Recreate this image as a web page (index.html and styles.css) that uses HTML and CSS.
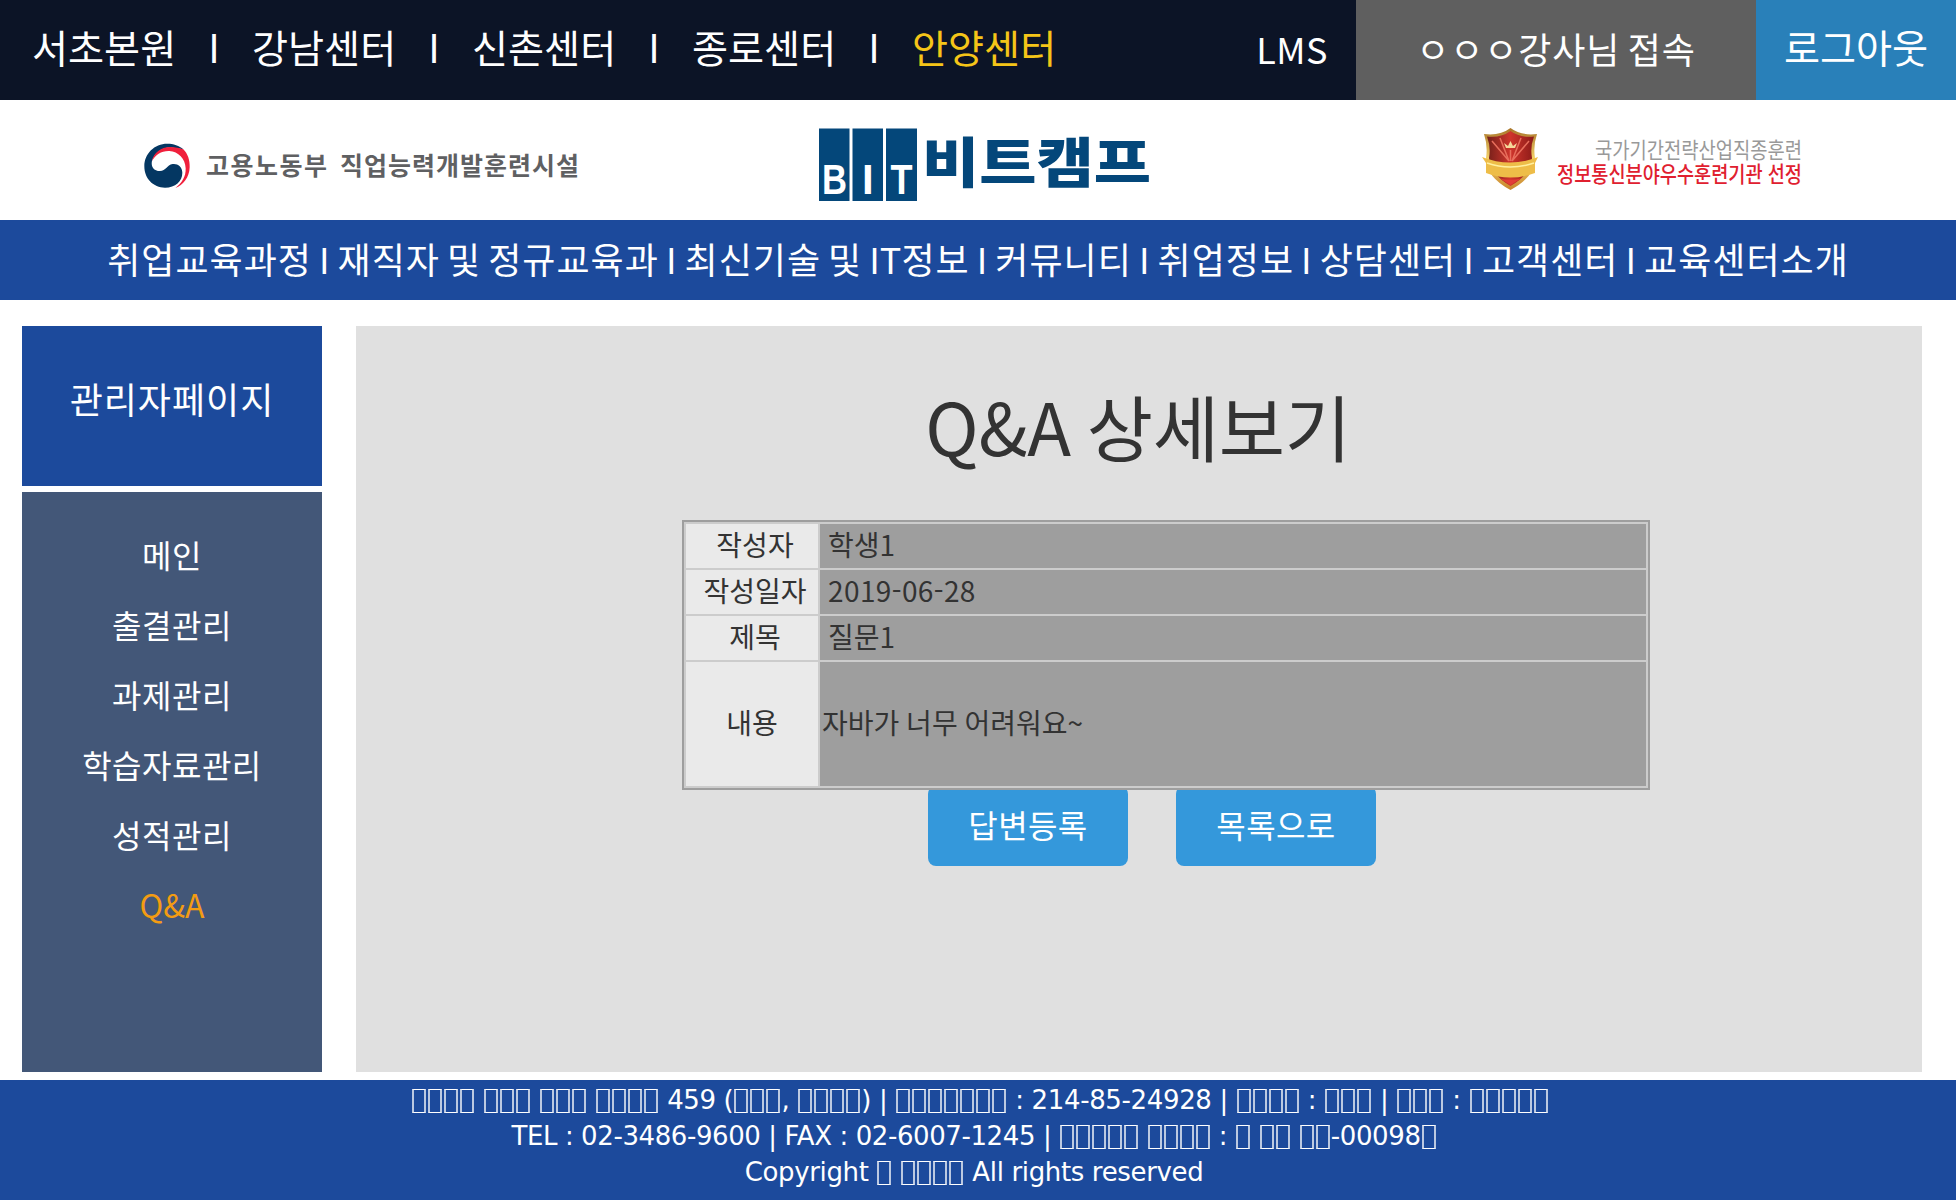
FILE: index.html
```html
<!DOCTYPE html>
<html lang="ko">
<head>
<meta charset="utf-8">
<title>Q&amp;A 상세보기</title>
<link rel="stylesheet" href="styles.css">
</head>
<body>
<header class="topbar">
  <nav class="centers"><a>서초본원</a><i>I</i><a>강남센터</a><i>I</i><a>신촌센터</a><i>I</i><a>종로센터</a><i>I</i><a class="current">안양센터</a></nav>
  <div class="lms">LMS</div>
  <div class="user">ㅇㅇㅇ강사님 접속</div>
  <div class="logout">로그아웃</div>
</header>
<div class="brand">
  <svg class="brand-svg" width="1956" height="120" viewBox="0 100 1956 120">
    <g transform="translate(130 120) scale(.3333)">
      <path d="M160 88C148 77 130 71 112 71C73 71 43 101 43 139C43 176 70 203 105 203C136 203 157 184 157 158C157 139 142 130 128 132C110 135 108 153 90 153C72 153 62 140 66 122C74 100 95 84 120 82Z" fill="#043762"/>
      <path d="M66 124C70 98 94 81 120 81C136 81 150 84 160 88C173 101 180 120 179 142C178 172 160 196 136 204C156 189 168 170 167 145C166 115 145 95 118 93C95 92 76 104 66 124Z" fill="#f0203c"/>
    </g>
    <g class="gov">
      <text x="206" y="174.500" textLength="121">고용노동부</text>
      <text x="340" y="174.500" textLength="239">직업능력개발훈련시설</text>
    </g>
    <path d="M819 128.500h30.500V201H819zM852.500 128.500H883V201h-30.500zM886 128.500h31V201h-31z" fill="#04477a"/>
    <g class="bit">
      <text x="822" y="193.500" textLength="25" lengthAdjust="spacingAndGlyphs">B</text>
      <text x="862" y="193.500">I</text>
      <text x="890.500" y="193.500" textLength="22" lengthAdjust="spacingAndGlyphs">T</text>
    </g>
    <text class="camp" x="922" y="182.500" textLength="229" lengthAdjust="spacingAndGlyphs">비트캠프</text>
    <defs>
      <linearGradient id="gold" x1="0" y1="0" x2="0" y2="1"><stop offset="0" stop-color="#a87428"/><stop offset=".5" stop-color="#f5d36a"/><stop offset="1" stop-color="#c8842c"/></linearGradient>
      <linearGradient id="red" x1="0" y1="0" x2="1" y2="0"><stop offset="0" stop-color="#74201a"/><stop offset=".5" stop-color="#cf352c"/><stop offset="1" stop-color="#8c1b18"/></linearGradient>
    </defs>
    <path d="M1484 134Q1500 136 1510.500 128Q1521 136 1537 134Q1533 146 1535 158Q1535 177 1510.500 190Q1486 177 1486 158Q1488 146 1484 134Z" fill="url(#gold)"/>
    <path d="M1487 136.500Q1501 138 1510.500 131Q1520 138 1534 136.500Q1530 147 1532 158Q1531 174 1510.500 186Q1490 174 1489 158Q1491 147 1487 136.500Z" fill="url(#red)"/>
    <path d="M1509 161L1492 141M1509 161L1500 138M1510.500 161V150M1512 161L1521 138M1512 161L1529 141" stroke="#e86e5c" stroke-width="1.500" fill="none"/>
    <path d="M1504 143l4 3 2.500-5 2.500 5 4-3-2 5h-9z" fill="#f6d79a"/>
    <path d="M1482 157Q1510 168 1538 157L1535 163V173Q1510 182 1486 173V163Z" fill="#eebd48"/>
    <path d="M1487 163Q1510 171 1534 163" stroke="#fff0a0" stroke-width="1.500" fill="none"/>
    <path d="M1500 178.500Q1510 181 1521 178.500L1510.500 185Z" fill="#e23c38"/>
    <text class="award grey" x="1595" y="157.500" textLength="207" lengthAdjust="spacingAndGlyphs">국가기간전략산업직종훈련</text>
    <text class="award red" x="1557" y="182" textLength="245" lengthAdjust="spacingAndGlyphs">정보통신분야우수훈련기관 선정</text>
  </svg>
</div>
<nav class="mainnav">취업교육과정 I 재직자 및 정규교육과 I 최신기술 및 <span class="latin">IT</span>정보 I 커뮤니티 I 취업정보 I 상담센터 I 고객센터 I 교육센터소개</nav>
<div class="content">
  <aside class="side">
    <div class="side-title">관리자페이지</div>
    <ul class="menu">
      <li>메인</li><li>출결관리</li><li>과제관리</li><li>학습자료관리</li><li>성적관리</li><li class="active">Q&amp;A</li>
    </ul>
  </aside>
  <main class="panel">
    <h1>Q&amp;A 상세보기</h1>
    <div class="detail">
      <div class="label">작성자</div><div class="value">학생1</div>
      <div class="label">작성일자</div><div class="value date">2019-06-28</div>
      <div class="label">제목</div><div class="value">질문1</div>
      <div class="label body-label">내용</div><div class="value body-value">자바가 너무 어려워요~</div>
    </div>
    <div class="actions"><button>답변등록</button><button>목록으로</button></div>
  </main>
</div>
<footer class="footer">
  <p><b></b><b></b><b></b><b></b> <b></b><b></b><b></b> <b></b><b></b><b></b> <b></b><b></b><b></b><b></b> 459 (<b></b><b></b><b></b>, <b></b><b></b><b></b><b></b>) | <b></b><b></b><b></b><b></b><b></b><b></b><b></b> : 214-85-24928 | <b></b><b></b><b></b><b></b> : <b></b><b></b><b></b> | <b></b><b></b><b></b> : <b></b><b></b><b></b><b></b><b></b></p>
  <p class="contact">TEL : 02-3486-9600 | FAX : 02-6007-1245 | <b></b><b></b><b></b><b></b><b></b> <b></b><b></b><b></b><b></b> : <b></b> <b></b><b></b> <b></b><b></b>-00098<b></b></p>
  <p class="copy">Copyright <b></b> <b></b><b></b><b></b><b></b> All rights reserved</p>
</footer>
</body>
</html>
```
FILE: styles.css
```css
* { box-sizing: border-box; margin: 0; padding: 0; }
body { width: 1956px; height: 1200px; background: #fff; color: #fff; font-family: "Noto Sans CJK KR", sans-serif; overflow: hidden; display: flex; flex-direction: column; white-space: nowrap; }
.topbar { height: 100px; background: #0c1426; display: flex; line-height: 95px; font-size: 36px; }
.centers { flex: 1; display: flex; padding-left: 32px; font-size: 39.200px; line-height: 92px; }
.centers a { width: 144px; }
.centers i { width: 76px; font-style: normal; text-align: center; }
.centers .current { color: #f5c518; }
.lms { width: 128px; text-align: center; letter-spacing: .5px; line-height: 96px; }
.user { width: 400px; background: #5f5f5f; text-align: center; letter-spacing: .9px; word-spacing: -3.500px; line-height: 96px; }
.logout { width: 200px; background: #2980b9; text-align: center; font-size: 39.200px; line-height: 92px; }
.brand { height: 120px; }
.brand-svg { display: block; }
.gov { font-size: 25px; font-weight: 700; fill: #5f6062; }
.bit { font-family: "Liberation Sans", sans-serif; font-weight: 700; font-size: 42px; fill: #fff; }
.camp { font-weight: 900; font-size: 54px; fill: #04477a; }
.award { font-size: 22px; }
.grey { fill: #999; }
.red { fill: #e0202f; font-weight: 500; }
.mainnav { height: 80px; background: #1c4a9c; text-align: center; font-size: 36px; letter-spacing: 1px; word-spacing: -4px; line-height: 76px; }
.latin { letter-spacing: 0; }
.content { height: 780px; padding: 26px 34px 8px 22px; display: flex; gap: 34px; }
.side { width: 300px; display: flex; flex-direction: column; gap: 6px; text-align: center; }
.side-title { height: 160px; background: #1c4a9c; font-size: 36px; letter-spacing: 1px; line-height: 144px; }
.menu { flex: 1; background: #435778; list-style: none; font-size: 32px; letter-spacing: .5px; line-height: 70px; padding-top: 27px; }
.menu .active { color: #f39c12; letter-spacing: 0; }
.panel { flex: 1; background: #e0e0e0; color: #333; display: flex; flex-direction: column; align-items: center; }
h1 { height: 194px; line-height: 197px; font-size: 72px; font-weight: 400; letter-spacing: -.2px; word-spacing: -4px; padding-right: 2px; }
.detail { position: relative; z-index: 1; margin-left: 54px; width: 968px; height: 270px; border: 2px solid #9e9e9e; padding: 2px; background: #ccc; display: grid; grid-template-columns: 132px 1fr; grid-template-rows: 44px 44px 44px 124px; gap: 2px; font-size: 28px; line-height: 41px; }
.label { background: #eaeaea; text-align: center; padding-left: 6px; }
.value { background: #9e9e9e; padding-left: 8px; }
.date { letter-spacing: .4px; }
.body-label { padding-left: 0; line-height: 121px; }
.body-value { padding-left: 2px; line-height: 121px; word-spacing: -1px; }
.actions { display: flex; gap: 48px; margin: -4px 0 0 26px; }
button { width: 200px; height: 80px; padding-bottom: 4px; border: 0; border-radius: 8px; background: #3498db; color: #fff; font: 32px/74px "Noto Sans CJK KR", sans-serif; letter-spacing: .4px; }
.footer { height: 120px; background: #1c4a9c; font: 26px/36px "DejaVu Sans", sans-serif; letter-spacing: -.35px; text-align: center; padding: 2px 0 0 4px; }
.footer p { height: 36px; }
/* empty glyph frame */
.footer b { display: inline-block; width: 14px; height: 24px; margin: 0 1px; vertical-align: -4px; border: solid #fff; border-width: 1px 2px; border-color: #fff rgba(255, 255, 255, .7); }
.footer .contact { padding-right: 12px; letter-spacing: -.4px; }
.footer .copy { padding-right: 12px; }
```
